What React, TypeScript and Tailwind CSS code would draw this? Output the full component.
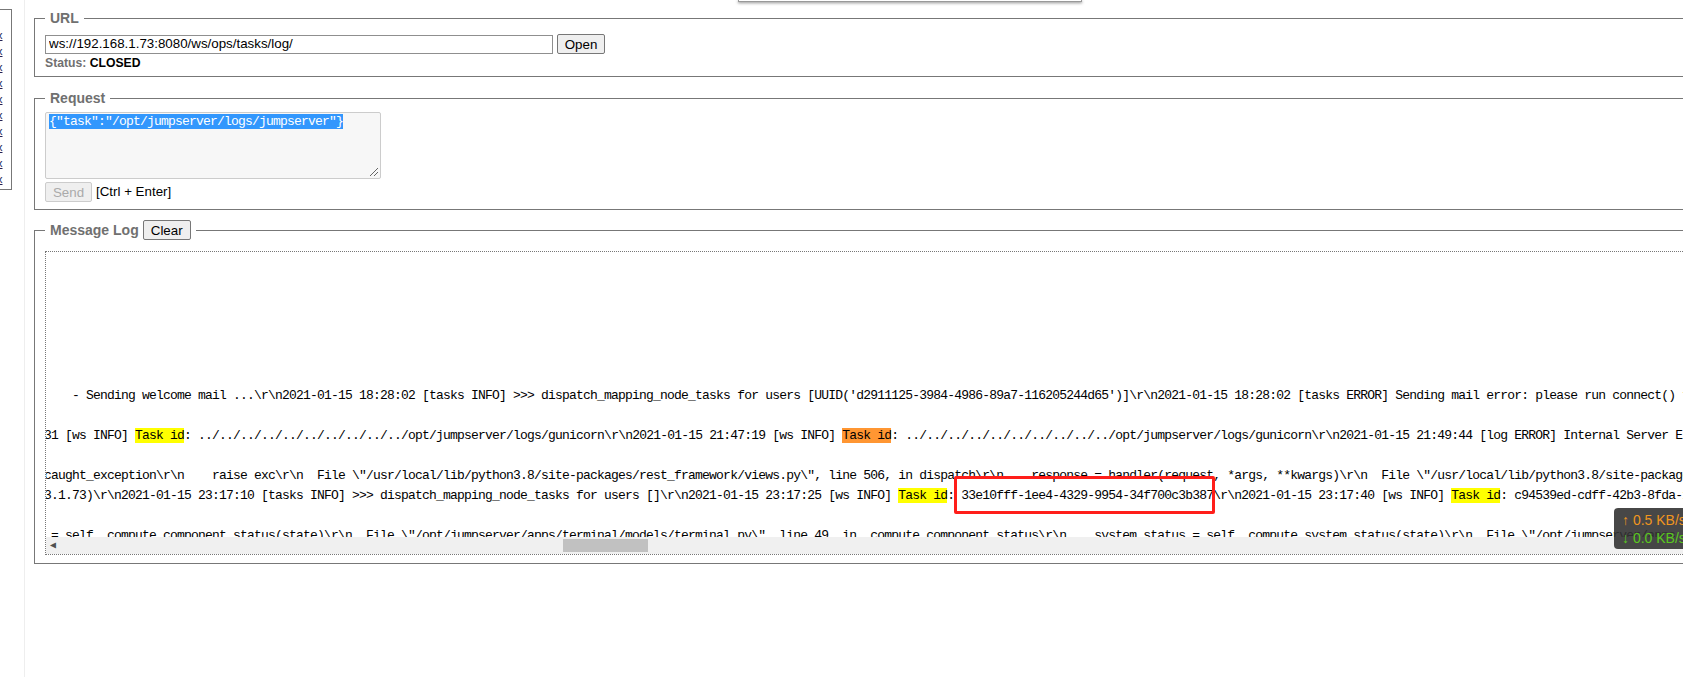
const mono = "font-['Liberation_Mono','DejaVu_Sans_Mono',monospace] tracking-[-0.8px]";

function Legend({ children }: { children: React.ReactNode }) {
  return <legend className="px-[5px] text-[14px] font-bold leading-[16px] text-[#707070]">{children}</legend>;
}

function Mark({ orange }: { orange?: boolean }) {
  return <span className={orange ? "bg-[#ff9632]" : "bg-[#ffff00]"}>Task id</span>;
}

export default function App() {
  return (
    <div className="h-[677px] w-[1683px] overflow-hidden bg-white font-['Liberation_Sans',Arial,sans-serif] text-[13px] text-black">
      <div className="flex h-full">
        <div className="h-full w-[25px] shrink-0 border-r border-[#eee] pt-[9px]">
          <div className="flex h-[181px] w-[12px] flex-col gap-[6px] overflow-hidden border border-l-0 border-[#777] pt-[20px] text-[11px] leading-[10px] text-[#225]">
            {Array.from({ length: 10 }).map((_, i) => (
              <span key={i} className="-ml-[3px] block underline">x</span>
            ))}
          </div>
        </div>
        <div className="relative w-[1700px] shrink-0 pl-[9px] pt-[10px]">
          <div className="absolute left-[713px] top-0 h-[2px] w-[344px] border-x border-b border-[#999] bg-white shadow-[0_1px_3px_rgba(0,0,0,0.5)]" />

          <fieldset className="h-[67px] border border-[#777] px-[10px]">
            <Legend>URL</Legend>
            <div className="mt-[8px] flex h-[20px] items-center gap-[4px]">
              <input readOnly value="ws://192.168.1.73:8080/ws/ops/tasks/log/" className="h-[19px] w-[508px] border border-[#8f8f8f] px-[3px] text-[13.33px] outline-none" />
              <button className="h-[20px] w-[48px] rounded-[2px] border border-[#777] bg-[#efefef] text-[13.33px]">Open</button>
            </div>
            <p className="mt-[2px] text-[12.2px] font-bold leading-[15px] text-[#707070]">
              Status: <span className="text-black">CLOSED</span>
            </p>
          </fieldset>

          <fieldset className="mt-[13px] h-[120px] border border-[#777] px-[10px]">
            <Legend>Request</Legend>
            <div className={`relative mt-[6px] h-[67px] w-[336px] rounded-[2px] border border-[#ccc] bg-[#f7f7f7] px-[3px] pt-[1px] text-[13px] leading-[15px] ${mono}`}>
              <span className="bg-[#3297fd] text-white">{'{"task":"/opt/jumpserver/logs/jumpserver"}'}</span>
              <svg className="absolute bottom-[1px] right-[1px]" width="10" height="10" viewBox="0 0 10 10" stroke="#666" strokeWidth="1" fill="none">
                <path d="M1 9 9 1M5 9l4-4" />
              </svg>
            </div>
            <div className="mt-[3px] flex h-[20px] items-center gap-[4px] text-[13.33px]">
              <button disabled className="h-[20px] w-[47px] rounded-[2px] border border-[#ccc] bg-[#efefef] text-[13.33px] text-[#aaa]">Send</button>
              <span>[Ctrl + Enter]</span>
            </div>
          </fieldset>

          <fieldset className="mt-[10px] h-[344px] border border-[#777] px-[10px]">
            <legend className="flex items-center gap-[4px] px-[5px] text-[14px] font-bold leading-[20px] text-[#707070]">
              Message Log
              <button className="h-[20px] w-[48px] rounded-[2px] border border-[#777] bg-[#efefef] text-[13.33px] font-normal text-black">Clear</button>
            </legend>
            <div className={`relative mt-[11px] flex h-[304px] w-[1660px] flex-col overflow-hidden border border-dotted border-[#777] ${mono}`}>
              <div className="flex min-h-0 flex-1 flex-col justify-end overflow-hidden text-[13px] leading-[20px] text-black whitespace-pre">
                <div className="-ml-[2px]">
                  <p>{"    - Sending welcome mail ...\\r\\n2021-01-15 18:28:02 [tasks INFO] >>> dispatch_mapping_node_tasks for users [UUID('d2911125-3984-4986-89a7-116205244d65')]\\r\\n2021-01-15 18:28:02 [tasks ERROR] Sending mail error: please run connect() first"}</p>
                  <p className="h-[20px]" />
                  <p>{"31 [ws INFO] "}<Mark />{": ../../../../../../../../../../opt/jumpserver/logs/gunicorn\\r\\n2021-01-15 21:47:19 [ws INFO] "}<Mark orange />{": ../../../../../../../../../../opt/jumpserver/logs/gunicorn\\r\\n2021-01-15 21:49:44 [log ERROR] Internal Server Error"}</p>
                  <p className="h-[20px]" />
                  <p>{"caught_exception\\r\\n    raise exc\\r\\n  File \\\"/usr/local/lib/python3.8/site-packages/rest_framework/views.py\\\", line 506, in dispatch\\r\\n    response = handler(request, *args, **kwargs)\\r\\n  File \\\"/usr/local/lib/python3.8/site-packages"}</p>
                  <p>{"3.1.73)\\r\\n2021-01-15 23:17:10 [tasks INFO] >>> dispatch_mapping_node_tasks for users []\\r\\n2021-01-15 23:17:25 [ws INFO] "}<Mark />{": 33e10fff-1ee4-4329-9954-34f700c3b387\\r\\n2021-01-15 23:17:40 [ws INFO] "}<Mark />{": c94539ed-cdff-42b3-8fda-1234"}</p>
                  <p className="h-[20px]" />
                  <p className="h-[11px]">{" = self._compute_component_status(state)\\r\\n  File \\\"/opt/jumpserver/apps/terminal/models/terminal.py\\\", line 49, in _compute_component_status\\r\\n    system_status = self._compute_system_status(state)\\r\\n  File \\\"/opt/jumpserver/apps"}</p>
                </div>
              </div>
              <div className="flex h-[17px] shrink-0 items-center bg-[#f0f0f0]">
                <span className="ml-[4px] w-[10px] text-[10px] leading-none tracking-normal text-[#505050]">◀</span>
                <div className="ml-[503px] h-[13px] w-[85px] bg-[#c1c1c1]" />
              </div>
            </div>
          </fieldset>

          <div className="absolute left-[929px] top-[476px] h-[38px] w-[261px] rounded-[2px] border-[3px] border-[#ff1e1a]" />
          <div className="absolute left-[1589px] top-[508px] flex h-[41px] w-[90px] flex-col justify-center rounded-[4px] bg-[#333]/90 pl-[8px] font-['Liberation_Sans',sans-serif] text-[14px] leading-[18px]">
            <span className="text-[#f0961e]">↑ 0.5 KB/s</span>
            <span className="text-[#5ac81e]">↓ 0.0 KB/s</span>
          </div>
        </div>
      </div>
    </div>
  );
}
